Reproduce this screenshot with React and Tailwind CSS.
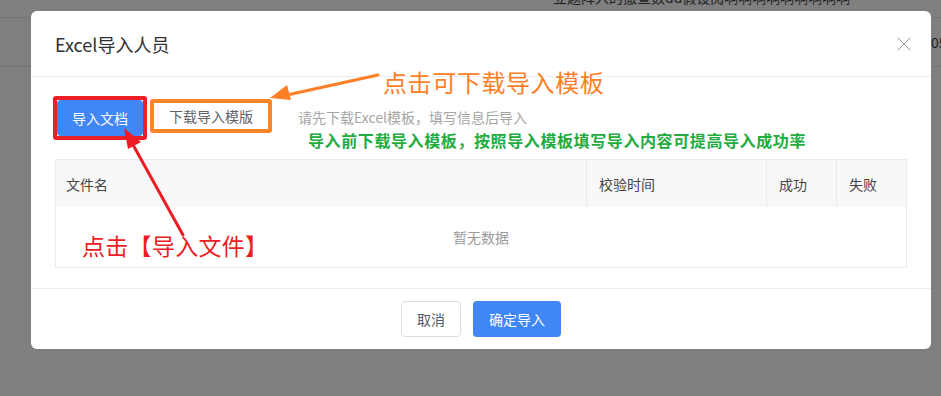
import React from 'react';
import { X } from 'lucide-react';

const font = "font-['Noto_Sans_CJK_SC','Noto_Sans',sans-serif]";

function Annotations() {
  return (
    <>
      <svg className="absolute inset-0 pointer-events-none" width="941" height="396" viewBox="0 0 941 396">
        {/* orange arrow to the template button */}
        <line x1="378" y1="75" x2="287" y2="95" stroke="#ff7f27" strokeWidth="3" strokeLinecap="round" />
        <polygon points="270,98 291,100 287,85" fill="#ff7f27" />
        {/* red arrow to the import button */}
        <line x1="183" y1="235" x2="132" y2="143" stroke="#ed1c24" strokeWidth="3" strokeLinecap="round" />
        <polygon points="124,128 141,142 128,149" fill="#ed1c24" />
      </svg>
      <div className="absolute left-[383px] top-[70px] text-[24px] leading-none tracking-[0.6px] text-[#ff7f27]">
        点击可下载导入模板
      </div>
      <div className="absolute left-[308px] top-[132px] text-[16px] leading-none font-bold tracking-[0.6px] text-[#22ac3f]">
        导入前下载导入模板，按照导入模板填写导入内容可提高导入成功率
      </div>
      <div className="absolute left-[82px] top-[234px] text-[23px] leading-none tracking-[0.3px] text-[#ed1c24]">
        点击【导入文件】
      </div>
    </>
  );
}

export default function App() {
  return (
    <div className={`relative w-[941px] h-[396px] overflow-hidden bg-[#7f7f7f] ${font}`}>
      {/* page behind the mask */}
      <div className="flex flex-col">
        <div className="h-[18px] border-b border-[#747474] pl-[553px]">
          <div className="-mt-[13px] text-sm text-[#1e1e1e] whitespace-nowrap">立题阵入的撤查数dd假设阅啊啊啊啊啊啊啊啊啊</div>
        </div>
        <div className="h-[49px] border-b border-[#747474] flex items-center pl-[931px] text-sm text-[#1e1e1e]">05</div>
      </div>

      {/* dialog */}
      <div className="absolute left-[31px] top-[11px] w-[900px] rounded-md bg-white">
        <div className="h-[66px] px-6 flex items-center justify-between border-b border-[#ebedf2]">
          <h2 className="text-lg text-[#303133] m-0">Excel导入人员</h2>
          <X size={24} strokeWidth={1} className="text-[#909399] -mr-[9px]" />
        </div>

        <div className="px-6 pt-[19px] pb-[20px]">
          <div className="flex items-start">
            <div className="-ml-[2px] w-[94px] h-[44px] border-4 border-[#ea1f27] rounded-[3px]">
              <button className="w-full h-full bg-[#4086f5] text-white text-sm rounded-sm">导入文档</button>
            </div>
            <button className="ml-[3px] mt-[3px] w-[122px] h-[34px] border-4 border-[#ff8426] rounded-[3px] bg-white text-sm text-[#606266]">
              下载导入模版
            </button>
            <span className="ml-[26px] mt-[11px] text-sm leading-5 text-[#a5a5a5]">请先下载Excel模板，填写信息后导入</span>
          </div>

          <div className="mt-[19px] border border-[#e8eaec]">
            <div className="grid grid-cols-[530px_180px_70px_70px] h-[47px] bg-[#f8f8f9] text-sm text-[#454545]">
              <div className="flex items-center pl-[10px]">文件名</div>
              <div className="flex items-center pl-3 border-l border-[#e8eaec]">校验时间</div>
              <div className="flex items-center pl-3 border-l border-[#e8eaec]">成功</div>
              <div className="flex items-center pl-3 border-l border-[#e8eaec]">失败</div>
            </div>
            <div className="h-[60px] flex items-center justify-center text-sm text-[#9a9a9a]">暂无数据</div>
          </div>
        </div>

        <div className="border-t border-[#ebedf2] py-3 flex justify-center gap-3">
          <button className="w-[60px] h-9 border border-[#dcdee2] rounded text-sm text-[#515a6e] bg-white">取消</button>
          <button className="w-[88px] h-9 rounded text-sm text-white bg-[#4086f5]">确定导入</button>
        </div>
      </div>

      <Annotations />
    </div>
  );
}
